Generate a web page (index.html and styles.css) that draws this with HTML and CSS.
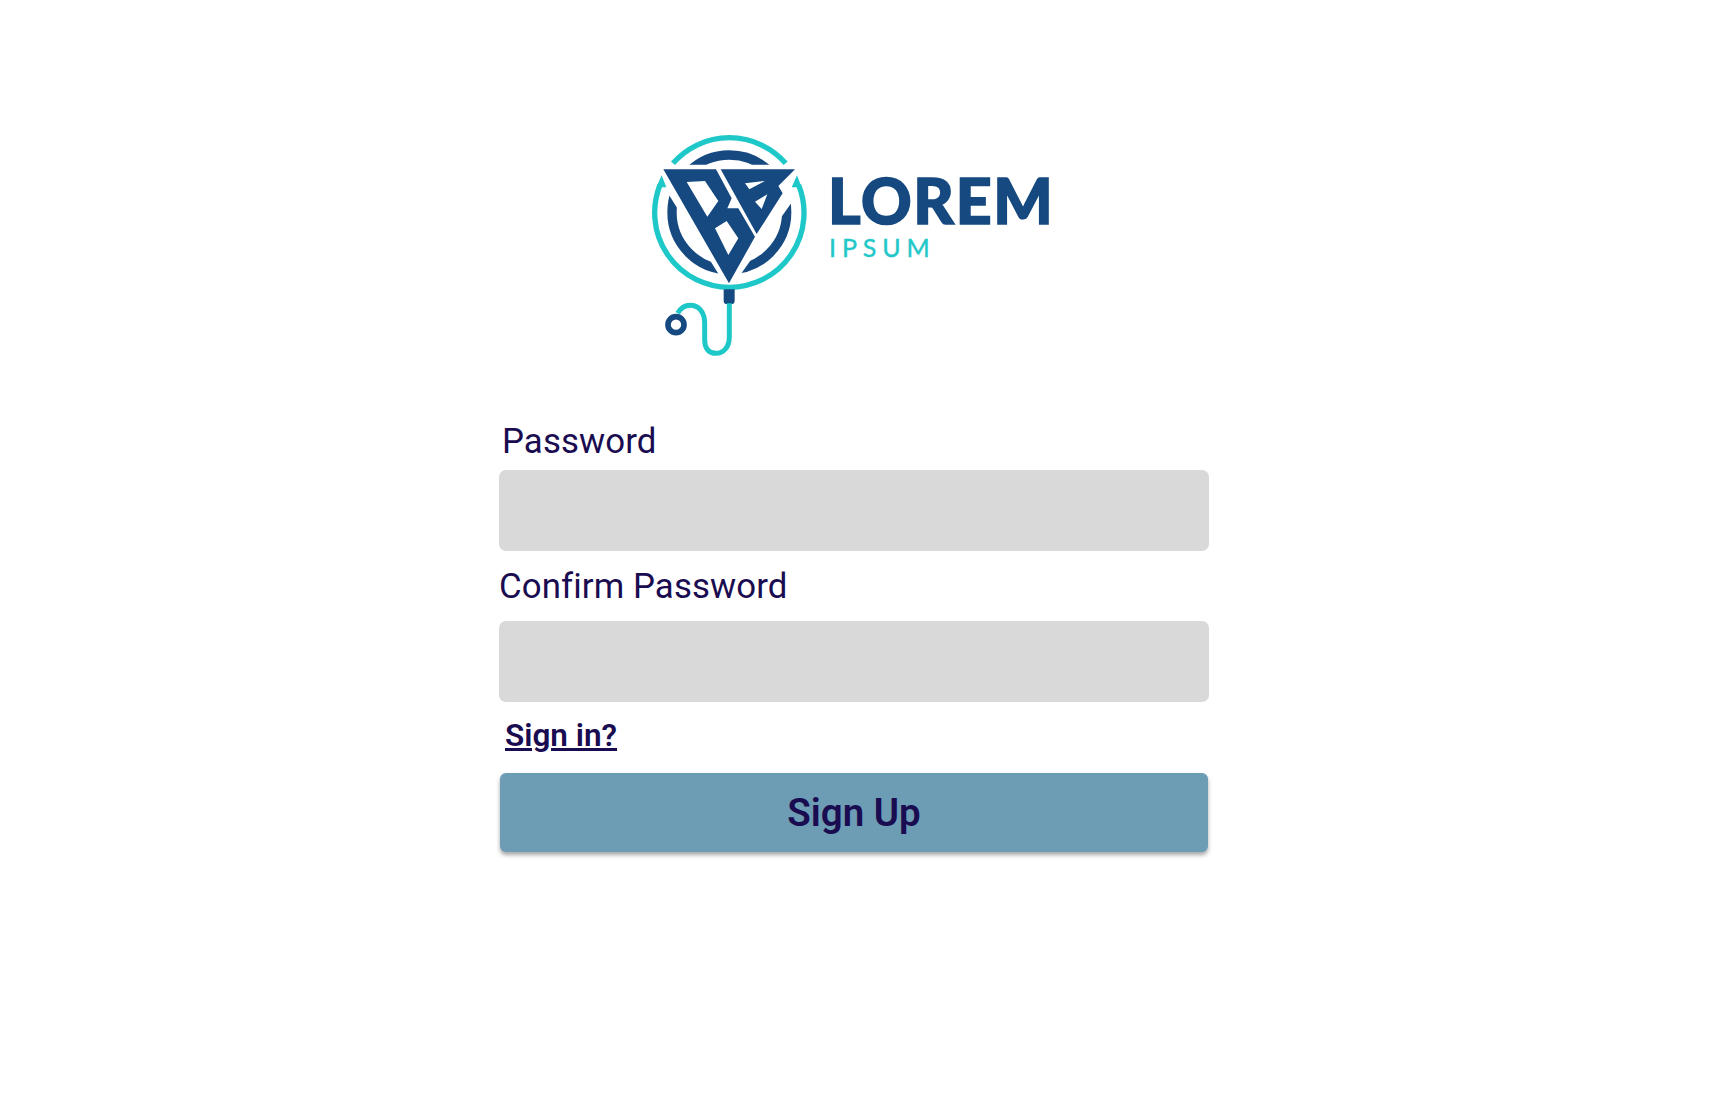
FILE: index.html
```html
<!DOCTYPE html>
<html lang="en">
<head>
<meta charset="utf-8">
<title>Sign Up</title>
<link rel="stylesheet" href="styles.css">
</head>
<body>
<main class="page">
  <div class="logo">
    <svg class="logo-mark" viewBox="0 0 600 750" aria-hidden="true">
      <circle cx="298" cy="277" r="172" fill="none" stroke="#15497f" stroke-width="28"/>
      <path fill="#fff" d="M60 134H540V170L297 512Z"/>
      <path fill="#fff" d="M262 462L297 490L335 462L335 500H262Z"/>
      <g fill="none" stroke="#1fc8c8" stroke-width="16">
        <path d="M129 130A224 224 0 0 1 467 130"/>
        <path d="M90 195A224 224 0 1 0 506 195"/>
      </g>
      <path fill="#1fc8c8" d="M95 166l-16 36h30zM501 166l-16 36h30z"/>
      <path fill="#15497f" fill-rule="evenodd" d="M100 148H258L305 235L292 265H325L375 350L297 490ZM170 186L232 290L265 243L225 183ZM255 325L295 405L325 355L290 303Z"/>
      <path fill="#15497f" fill-rule="evenodd" d="M272 148H495L445 198L458 220L380 342ZM345 190L405 183L358 208ZM375 245L412 223L395 267Z"/>
      <path fill="#15497f" d="M281 508H314V542Q314 552 304 552H291Q281 552 281 542Z"/>
      <path fill="none" stroke="#1fc8c8" stroke-width="15" d="M298 550V650C298 682 280 700 258 700C236 700 224 685 224 660V610C224 575 205 556 180 556C162 556 150 568 143 580"/>
      <circle cx="138" cy="614" r="24" fill="none" stroke="#15497f" stroke-width="17"/>
    </svg>
    <div class="logo-text">
      <div class="logo-name">LOREM</div>
      <div class="logo-sub">IPSUM</div>
    </div>
  </div>
  <form class="form">
    <label class="label label-first" for="pw">Password</label>
    <input class="field" id="pw" type="password">
    <label class="label label-second" for="cpw">Confirm Password</label>
    <input class="field field-second" id="cpw" type="password">
    <a class="signin" href="#">Sign in?</a>
    <button class="submit" type="button">Sign Up</button>
  </form>
</main>
</body>
</html>
```
FILE: styles.css
```css
* { box-sizing: border-box; }
html, body { margin: 0; background: #fff; }
body { height: 1117px; overflow: hidden; font-family: Roboto, "Liberation Sans", sans-serif; color: #1a0c50; }
.page { width: 710px; margin-left: 499px; padding-top: 120px; }
.logo { display: flex; height: 250px; padding-left: 131px; }
.logo-mark { width: 200px; height: 250px; flex: none; }
.logo-text { padding-top: 49px; margin-left: -2px; }
.logo-name { font-family: Lato, sans-serif; font-weight: 900; font-size: 62.5px; line-height: 62px; color: #15497f; letter-spacing: 1.7px; -webkit-text-stroke: 1.6px #15497f; }
.logo-sub { font-family: Lato, sans-serif; font-weight: 400; font-size: 25px; line-height: 26px; margin-top: 3px; margin-left: 1px; color: #22c7c9; letter-spacing: 5.9px; -webkit-text-stroke: 0.4px #22c7c9; }
.form { display: flex; flex-direction: column; align-items: stretch; }
.label { display: block; font-size: 34.8px; line-height: 40px; letter-spacing: 0.1px; }
.label-first { margin-top: 51px; margin-bottom: 9px; padding-left: 3px; }
.label-second { margin-top: 15px; margin-bottom: 15px; }
.field { display: block; width: 100%; height: 81px; border: 0; border-radius: 7px; background: #d9d9d9; padding: 0 12px; }
.field-second { height: 81px; }
.signin { align-self: flex-start; margin-top: 16px; margin-left: 6px; font-size: 31.5px; line-height: 36px; font-weight: 600; color: #1a0c50; text-decoration-thickness: 2.5px; }
.submit { display: block; width: 708px; height: 79px; margin: 19px 0 0 1px; border: 0; border-radius: 6px; background: #6d9cb5; box-shadow: 0 3px 4px rgba(0,0,0,.35); font-family: Roboto, sans-serif; font-size: 38.5px; font-weight: 600; color: #1a0c50; }
```
